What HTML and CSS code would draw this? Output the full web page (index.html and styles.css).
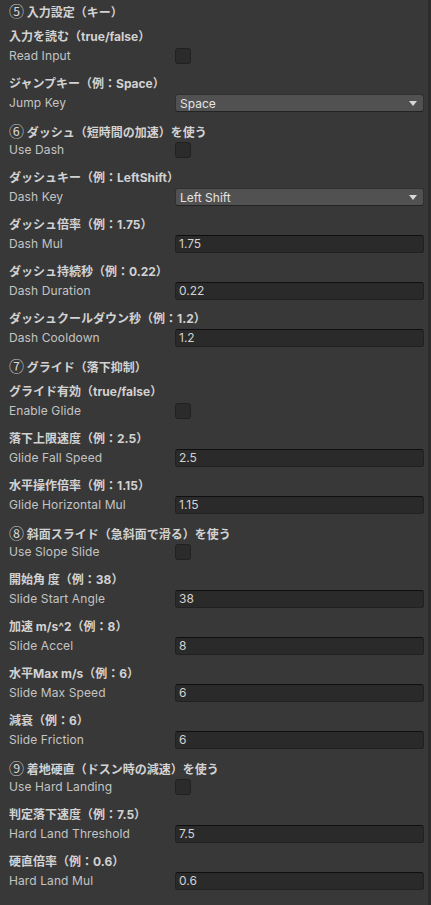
FILE: index.html
```html
<!DOCTYPE html>
<html lang="ja">
<head>
<meta charset="utf-8">
<link rel="stylesheet" href="styles.css">
</head>
<body>
<div class="inspector">
  <div class="section-title"><span class="num">⑤</span> 入力設定（キー）</div>

  <div class="prop"><div class="prop-head">入力を読む（true/false）</div>
    <div class="row"><span class="label">Read Input</span><span class="checkbox"></span></div></div>

  <div class="prop"><div class="prop-head">ジャンプキー（例：Space）</div>
    <div class="row"><span class="label">Jump Key</span><span class="dropdown"><span>Space</span><span class="arrow"></span></span></div></div>

  <div class="prop"><div class="prop-head"><span class="num">⑥</span> ダッシュ（短時間の加速）を使う</div>
    <div class="row"><span class="label">Use Dash</span><span class="checkbox"></span></div></div>

  <div class="prop"><div class="prop-head">ダッシュキー（例：LeftShift）</div>
    <div class="row"><span class="label">Dash Key</span><span class="dropdown"><span>Left Shift</span><span class="arrow"></span></span></div></div>

  <div class="prop"><div class="prop-head">ダッシュ倍率（例：1.75）</div>
    <div class="row"><span class="label">Dash Mul</span><span class="field">1.75</span></div></div>

  <div class="prop"><div class="prop-head">ダッシュ持続秒（例：0.22）</div>
    <div class="row"><span class="label">Dash Duration</span><span class="field">0.22</span></div></div>

  <div class="prop"><div class="prop-head">ダッシュクールダウン秒（例：1.2）</div>
    <div class="row"><span class="label">Dash Cooldown</span><span class="field">1.2</span></div></div>

  <div class="section-title"><span class="num">⑦</span> グライド（落下抑制）</div>

  <div class="prop"><div class="prop-head">グライド有効（true/false）</div>
    <div class="row"><span class="label">Enable Glide</span><span class="checkbox"></span></div></div>

  <div class="prop"><div class="prop-head">落下上限速度（例：2.5）</div>
    <div class="row"><span class="label">Glide Fall Speed</span><span class="field">2.5</span></div></div>

  <div class="prop"><div class="prop-head">水平操作倍率（例：1.15）</div>
    <div class="row"><span class="label">Glide Horizontal Mul</span><span class="field">1.15</span></div></div>

  <div class="prop"><div class="prop-head"><span class="num">⑧</span> 斜面スライド（急斜面で滑る）を使う</div>
    <div class="row"><span class="label">Use Slope Slide</span><span class="checkbox"></span></div></div>

  <div class="prop"><div class="prop-head">開始角 度（例：38）</div>
    <div class="row"><span class="label">Slide Start Angle</span><span class="field">38</span></div></div>

  <div class="prop"><div class="prop-head">加速 m/s^2（例：8）</div>
    <div class="row"><span class="label">Slide Accel</span><span class="field">8</span></div></div>

  <div class="prop"><div class="prop-head">水平Max m/s（例：6）</div>
    <div class="row"><span class="label">Slide Max Speed</span><span class="field">6</span></div></div>

  <div class="prop"><div class="prop-head">減衰（例：6）</div>
    <div class="row"><span class="label">Slide Friction</span><span class="field">6</span></div></div>

  <div class="prop"><div class="prop-head"><span class="num">⑨</span> 着地硬直（ドスン時の減速）を使う</div>
    <div class="row"><span class="label">Use Hard Landing</span><span class="checkbox"></span></div></div>

  <div class="prop"><div class="prop-head">判定落下速度（例：7.5）</div>
    <div class="row"><span class="label">Hard Land Threshold</span><span class="field">7.5</span></div></div>

  <div class="prop"><div class="prop-head">硬直倍率（例：0.6）</div>
    <div class="row"><span class="label">Hard Land Mul</span><span class="field">0.6</span></div></div>
</div>
</body>
</html>
```

FILE: styles.css
```css
html, body {
  margin: 0;
  padding: 0;
  background: #383838;
}
body {
  width: 431px;
  height: 905px;
  overflow: hidden;
  font-family: "Inter", "Noto Sans CJK JP", sans-serif;
  font-size: 12px;
  color: #c4c4c4;
}
.inspector {
  box-sizing: border-box;
  width: 431px;
  min-height: 905px;
  padding: 2px 4px 0 9px;
  border-right: 3px solid #2c2c2c;
}
.section-title,
.prop-head {
  height: 19px;
  line-height: 18px;
  font-weight: 700;
  color: #d2d2d2;
  white-space: nowrap;
}
.section-title {
  margin-bottom: 7px;
}
.num {
  font-family: "Noto Sans CJK JP", sans-serif;
  font-weight: 400;
  font-size: 15px;
  color: #d2d2d2;
}
.prop {
  margin-bottom: 10px;
}
.row {
  display: grid;
  grid-template-columns: 166px 1fr;
  align-items: center;
  height: 18px;
}
.label {
  line-height: 18px;
  color: #c4c4c4;
  white-space: nowrap;
  letter-spacing: 0.1px;
}
.checkbox {
  box-sizing: border-box;
  width: 16px;
  height: 16px;
  background: #2b2b2b;
  border: 1px solid #212121;
  border-radius: 3px;
}
.field {
  box-sizing: border-box;
  height: 18px;
  line-height: 16px;
  padding: 0 3px;
  background: #2a2a2a;
  border: 1px solid #212121;
  border-top-color: #0f0f0f;
  border-radius: 3px;
  color: #d2d2d2;
}
.dropdown {
  box-sizing: border-box;
  height: 18px;
  display: flex;
  align-items: center;
  justify-content: space-between;
  padding: 0 6px 0 4px;
  background: #515151;
  border: 1px solid #303030;
  border-bottom-color: #232323;
  border-radius: 3px;
  color: #e4e4e4;
}
.arrow {
  width: 0;
  height: 0;
  border-left: 4px solid transparent;
  border-right: 4px solid transparent;
  border-top: 5px solid #d8d8d8;
  margin-top: 1px;
}
```
